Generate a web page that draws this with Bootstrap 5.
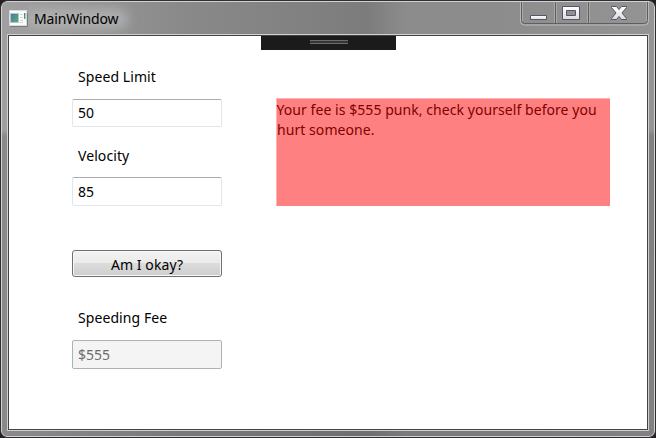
<!DOCTYPE html>
<html lang="en">
<head>
<meta charset="utf-8">
<title>MainWindow</title>
<link href="https://cdn.jsdelivr.net/npm/bootstrap@5.3.0/dist/css/bootstrap.min.css" rel="stylesheet">
<style>
body{background:#231f23;font-family:"Noto Sans","Open Sans",sans-serif;font-size:14px;line-height:20px;color:#000;overflow:hidden}
.window{width:656px;height:438px;border:1px solid #302e32;border-radius:7px 7px 6px 6px;overflow:hidden}
.chrome{border:1px solid #d2d2d2;border-radius:6px;padding:0 5px 5px;
background:linear-gradient(180deg,transparent 0 128px,rgba(60,60,60,.22) 134px),linear-gradient(90deg,#a0a0a0 0,#898989 28%,#848484 40%,#7c7c7c 56%,#8c8c8c 62%,#8c8c8c 75%,#949494 100%)}
.titlebar{height:32px;isolation:isolate}
.app-icon{margin:8px 0 0 2px}
.caption-text{position:relative;margin:7px 0 0 5px;white-space:nowrap;letter-spacing:-.15px}
.caption-text::before{content:"";position:absolute;inset:0 -10px 0 -8px;background:#b0b0b0;filter:blur(6px);border-radius:10px;z-index:-1}
.controls{width:129px;height:26px}
.client{border:1px solid #d0d0d0}
.surface{border:1px solid #454345;background:#fff;height:395px}
.grip{left:50%;margin-left:-67px;top:0;width:135px;height:14px;background:#1b1b1b;padding-top:4px}
.grip-lines{width:38px;height:4px;border:solid #6c6c6c;border-width:1px 0;background:#353535}
.entry-form{width:150px;margin-left:63px;padding-top:31px}
.entry-form label{height:20px;padding-left:6px;white-space:nowrap;letter-spacing:.08px}
.field.form-control{height:28px;margin-top:12px;padding:0 5px 1px;font-size:14px;line-height:20px;border:1px solid #e1e6ee;border-top-color:#aaacb3;border-radius:2px;color:#000}
.field.tall{height:29px;padding-bottom:0}
.field.form-control:disabled{background:#f4f4f4;border-color:#adb2b5;color:#6d6d6d;opacity:1}
.second-label{margin-top:19px}
.second-label + .field.form-control{margin-top:11px}
.check-btn.btn{margin-top:44px;height:27px;border:1px solid #707070;border-radius:3px;padding:2px 0 0;font-size:14px;line-height:23px;color:#000;letter-spacing:.08px;background:linear-gradient(#f2f2f2,#ebebeb 50%,#dcdcdc 50%,#cecece);box-shadow:inset 0 0 0 1px #f8f8f8}
.fee-label{margin-top:31px}
.notice{width:334px;height:108px;margin:62px 0 0 54px;padding-top:1px;background:#ff8080;border:solid #ffb3b3;border-width:1px 0 0 1px;color:#800000;letter-spacing:.06px;text-indent:-.5px;white-space:nowrap}
</style>
<script src="https://cdn.jsdelivr.net/npm/bootstrap@5.3.0/dist/js/bootstrap.bundle.min.js"></script>
</head>
<body>
<div class="window d-flex">
<div class="chrome flex-fill">
<header class="titlebar d-flex align-items-start">
<svg class="app-icon" width="20" height="18" viewBox="0 0 20 18"><path d="M1 16.500h17.500V3" fill="none" stroke="#777c7b"/><path fill="#fafafa" stroke="#d7dbd9" d="M.5.5h17v15H.5z"/><defs><linearGradient id="scene" x2="1" y2="1"><stop stop-color="#4676a3"/><stop offset="1" stop-color="#5cae7b"/></linearGradient><linearGradient id="glyph" x2="0" y2="1"><stop stop-color="#fff"/><stop offset="1" stop-color="#dcdcdc"/></linearGradient></defs><path fill="url(#scene)" stroke="#b3c4cb" d="M1.500 3.500h8v9h-8z"/><path d="M11 4.500h3m-3 3h3m-3 3h3m-3 2h3" stroke="#d1d5d6"/><path fill="url(#scene)" d="M15 3h1.500v6H15z"/></svg>
<span class="caption-text">MainWindow</span>
<svg class="controls ms-auto" viewBox="0 0 129 26">
<path d="M.5 0v19q0 4 4 4h120q4 0 4-4V0" fill="none" stroke="#b8b8b8"/>
<path d="M1.500 0v17.500q0 4 3 4h120q3 0 3-4V0M35.500 0v21.500M68.500 0v21.500" fill="none" stroke="#5e5e60"/>
<path d="M2.500 0v19M34.500 0v21M36.500 0v21M67.500 0v21M69.500 0v21M126.500 0v19" stroke="#a8a8a8"/>
<g fill="url(#glyph)" stroke="#535666"><path d="M10.500 13.500h16v4h-16z"/><path fill-rule="evenodd" d="M42.500 4.500h17v13h-17zM46.500 8.500v5h9v-5z"/><path d="M91.500 4.500h5l2.500 3 2.500-3h5v1l-4.500 5.500 4.500 5.500v1h-5l-2.500-3-2.500 3h-5v-1l4.500-5.500-4.500-5.500z"/></g>
</svg>
</header>
<main class="client">
<div class="surface position-relative d-flex align-items-start">
<div class="grip position-absolute d-flex justify-content-center"><div class="grip-lines"></div></div>
<form class="entry-form d-flex flex-column">
<label for="limit">Speed Limit</label>
<input id="limit" class="field form-control" value="50">
<label for="velocity" class="second-label">Velocity</label>
<input id="velocity" class="field tall form-control" value="85">
<button type="button" class="check-btn btn">Am I okay?</button>
<label for="fee" class="fee-label">Speeding Fee</label>
<input id="fee" class="field tall form-control" value="$555" disabled>
</form>
<div class="notice">Your fee is $555 punk, check yourself before you<br>hurt someone.</div>
</div>
</main>
</div>
</div>
</body>
</html>
